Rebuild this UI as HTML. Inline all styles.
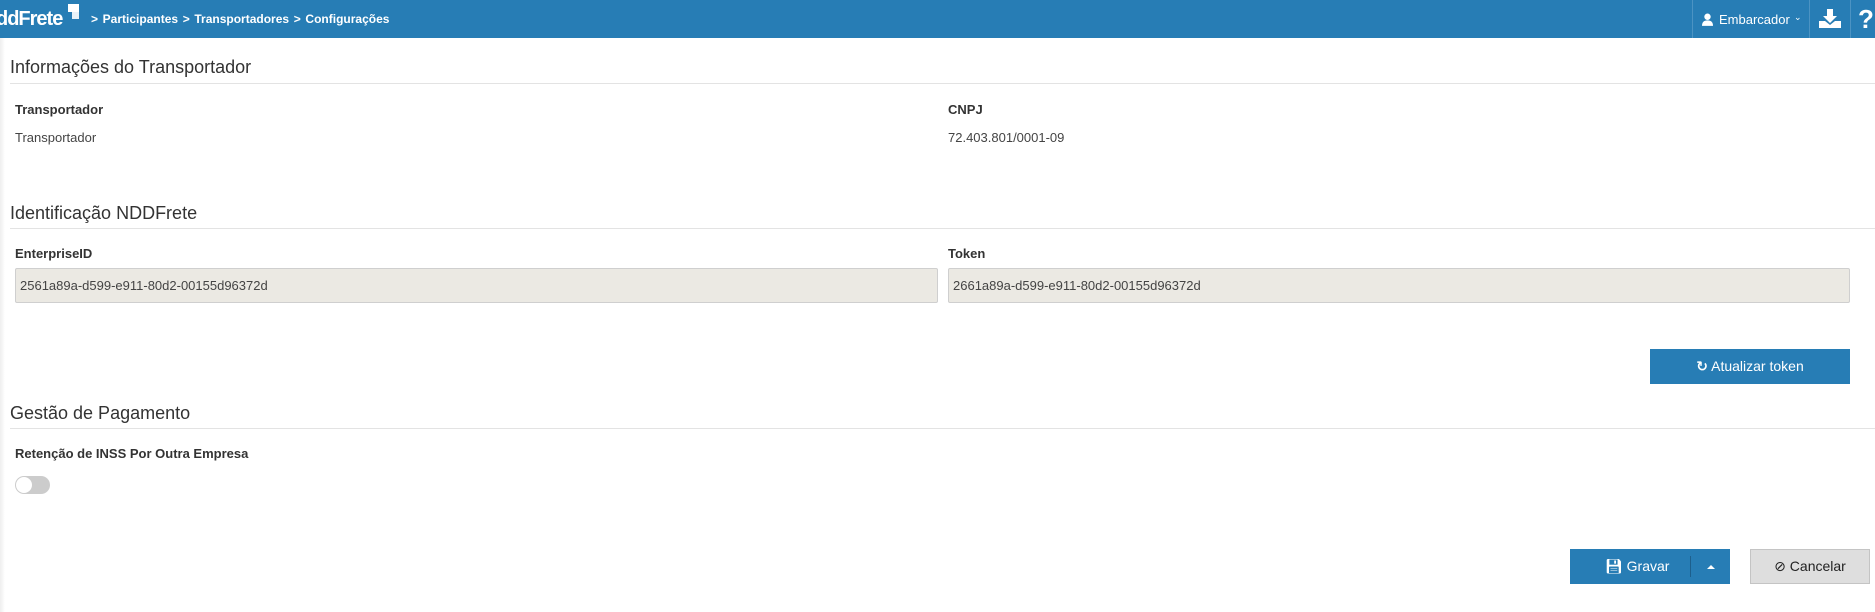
<!DOCTYPE html>
<html><head><meta charset="utf-8"><style>
*{box-sizing:border-box;margin:0;padding:0}
body{width:1875px;height:612px;overflow:hidden;background:#fff;font-family:"Liberation Sans","DejaVu Sans",sans-serif;color:#333;position:relative}
.top{position:absolute;left:0;top:0;width:1875px;height:38px;background:#277db5;color:#fff}
.abs{position:absolute}
.logo{left:-4px;top:8px;font-size:20px;font-weight:bold;letter-spacing:-1px}
.sq{background:#fff}
.bc{top:12px;font-size:12px;font-weight:bold;word-spacing:-1px}
.sep{top:0;width:1px;height:38px;background:#4b93c3}
h2{position:absolute;left:10px;font-size:18px;font-weight:normal;color:#333}
.line{position:absolute;left:10px;right:0;height:1px;background:#e3e3e3}
.lbl{position:absolute;font-size:13px;font-weight:bold;color:#333}
.val{position:absolute;font-size:13px;color:#444}
.inp{position:absolute;height:35px;background:#ebe9e3;border:1px solid #cfcfcf;border-radius:2px;font-size:13px;color:#444;padding:9px 4px}
.btn{position:absolute;background:#277db5;color:#fff;font-size:14px;text-align:center;line-height:35px;height:35px}
</style></head><body>
<div class="top">
  <div class="abs logo">ddFrete</div>
  <div class="abs sq" style="left:68px;top:4px;width:11px;height:8px"></div>
  <div class="abs sq" style="left:72px;top:12px;width:7px;height:7px;opacity:.9"></div>
  <div class="abs bc" style="left:91px">&gt;&nbsp; Participantes &nbsp;&gt;&nbsp; Transportadores &nbsp;&gt;&nbsp; Configurações</div>
  <div class="abs sep" style="left:1692px"></div>
  <div class="abs sep" style="left:1809px"></div>
  <div class="abs sep" style="left:1850px"></div>
  <svg class="abs" style="left:1702px;top:13px" width="11" height="13" viewBox="0 0 12 14"><circle cx="6" cy="4" r="3.5" fill="#fff"/><path d="M0 14 Q0 8 6 8 Q12 8 12 14Z" fill="#fff"/></svg>
  <div class="abs" style="left:1719px;top:12px;font-size:13px">Embarcador</div>
  <div class="abs" style="left:1794px;top:12px;font-size:9px">&#8964;</div>
  <svg class="abs" style="left:1819px;top:9px" width="22" height="19" viewBox="0 0 22 19"><path d="M8 0h6v7h4l-7 7-7-7h4z" fill="#fff"/><path d="M0 12h6l5 4 5-4h6v7H0z" fill="#fff"/></svg>
  <div class="abs" style="left:1858px;top:4px;font-size:26px;font-weight:bold">?</div>
</div>
<div class="abs" style="left:0;top:38px;width:5px;height:574px;background:linear-gradient(to right,#eee,#fff)"></div>

<h2 style="top:57px">Informações do Transportador</h2>
<div class="line" style="top:83px"></div>
<div class="lbl" style="left:15px;top:102px">Transportador</div>
<div class="val" style="left:15px;top:130px">Transportador</div>
<div class="lbl" style="left:948px;top:102px">CNPJ</div>
<div class="val" style="left:948px;top:130px">72.403.801/0001-09</div>

<h2 style="top:203px">Identificação NDDFrete</h2>
<div class="line" style="top:228px"></div>
<div class="lbl" style="left:15px;top:246px">EnterpriseID</div>
<div class="inp" style="left:15px;top:268px;width:923px">2561a89a-d599-e911-80d2-00155d96372d</div>
<div class="lbl" style="left:948px;top:246px">Token</div>
<div class="inp" style="left:948px;top:268px;width:902px">2661a89a-d599-e911-80d2-00155d96372d</div>

<div class="btn" style="left:1650px;top:349px;width:200px"><span style="font-weight:bold">&#x21bb;</span> Atualizar token</div>

<h2 style="top:403px">Gestão de Pagamento</h2>
<div class="line" style="top:428px"></div>
<div class="lbl" style="left:15px;top:446px">Retenção de INSS Por Outra Empresa</div>
<div class="abs" style="left:15px;top:476px;width:35px;height:18px;border-radius:9px;background:#ccc"></div>
<div class="abs" style="left:16px;top:477px;width:16px;height:16px;border-radius:8px;background:#fff"></div>

<div class="btn" style="left:1570px;top:549px;width:160px">
  <span style="position:absolute;left:35px;top:0">&#128190;&#xFE0E; Gravar</span>
  <span style="position:absolute;left:120px;top:7px;width:1px;height:21px;background:#1d5f8c"></span>
  <span style="position:absolute;left:137px;top:16px;width:0;height:0;border-left:4px solid transparent;border-right:4px solid transparent;border-bottom:4px solid #fff"></span>
</div>
<div class="btn" style="left:1750px;top:549px;width:120px;background:#dedede;color:#222;border:1px solid #c4c4c4;line-height:33px">&#8856; Cancelar</div>
</body></html>
